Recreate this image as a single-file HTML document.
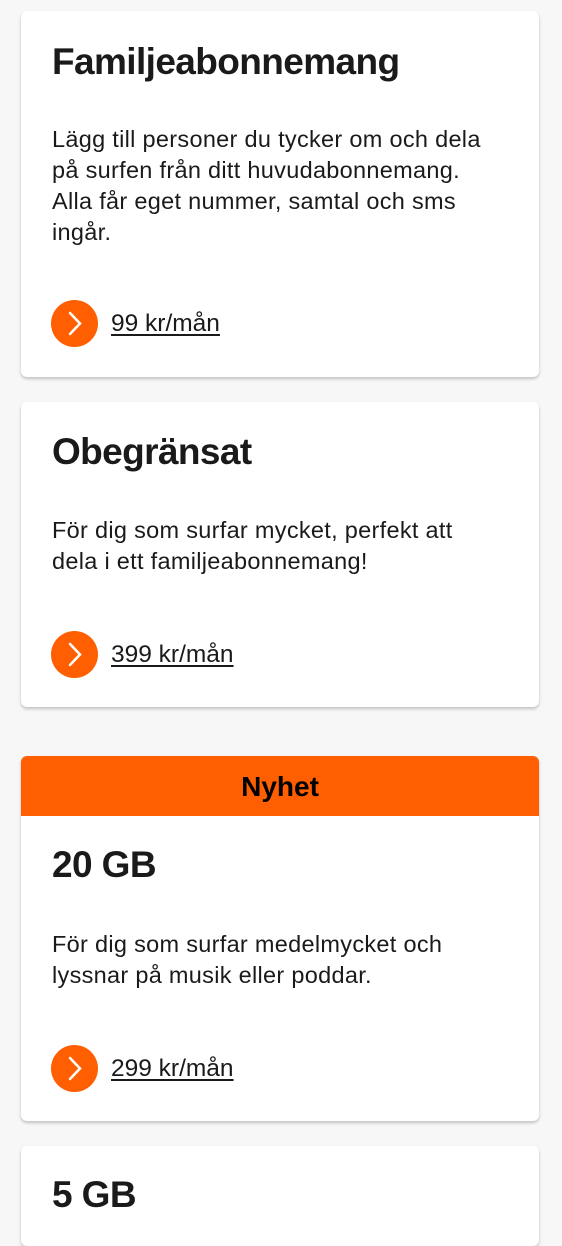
<!DOCTYPE html>
<html><head><meta charset="utf-8"><style>
body{margin:0;background:#f7f7f7;width:562px;height:1200px;overflow:hidden;font-family:"Liberation Sans",Arial,sans-serif;color:#1a1a1a;position:relative}
.card{position:absolute;left:21px;width:518px;background:#fff;border-radius:6px;box-shadow:0 2px 3px rgba(0,0,0,.22)}
.t{position:absolute;left:31px;font-weight:bold;font-size:37px;letter-spacing:-0.6px;line-height:40px;margin:0}
.p{position:absolute;left:31px;font-size:23.5px;letter-spacing:0.3px;line-height:31px;margin:0;white-space:nowrap}
.btn{position:absolute;left:30px;width:47px;height:47px;border-radius:50%;background:#ff5f00}
.btn svg{position:absolute;left:0;top:0}
.l{position:absolute;left:90px;font-size:24.5px;text-decoration:underline;text-underline-offset:3px;line-height:26px}
.hd{position:absolute;left:0;top:0;width:518px;height:60px;background:#ff5f00;border-radius:6px 6px 0 0;text-align:center;font-weight:bold;font-size:28px;line-height:62px;color:#000}
</style></head><body>
<div class="card" style="top:11px;height:366px">
<h1 class="t" style="top:31px">Familjeabonnemang</h1>
<p class="p" style="top:113px">Lägg till personer du tycker om och dela<br>på surfen från ditt huvudabonnemang.<br>Alla får eget nummer, samtal och sms<br>ingår.</p>
<div class="btn" style="top:289px"><svg width="47" height="47"><path d="M19 13 L29 23.5 L19 34" stroke="#fff" stroke-width="2.5" fill="none" stroke-linecap="round"/></svg></div>
<div class="l" style="top:300px">99 kr/mån</div>
</div>
<div class="card" style="top:402px;height:305px">
<h1 class="t" style="top:30px">Obegränsat</h1>
<p class="p" style="top:113px">För dig som surfar mycket, perfekt att<br>dela i ett familjeabonnemang!</p>
<div class="btn" style="top:229px"><svg width="47" height="47"><path d="M19 13 L29 23.5 L19 34" stroke="#fff" stroke-width="2.5" fill="none" stroke-linecap="round"/></svg></div>
<div class="l" style="top:240px">399 kr/mån</div>
</div>
<div class="card" style="top:756px;height:365px">
<div class="hd">Nyhet</div>
<h1 class="t" style="top:89px">20 GB</h1>
<p class="p" style="top:173px">För dig som surfar medelmycket och<br>lyssnar på musik eller poddar.</p>
<div class="btn" style="top:289px"><svg width="47" height="47"><path d="M19 13 L29 23.5 L19 34" stroke="#fff" stroke-width="2.5" fill="none" stroke-linecap="round"/></svg></div>
<div class="l" style="top:300px">299 kr/mån</div>
</div>
<div class="card" style="top:1146px;height:100px">
<h1 class="t" style="top:29px">5 GB</h1>
</div>
</body></html>
